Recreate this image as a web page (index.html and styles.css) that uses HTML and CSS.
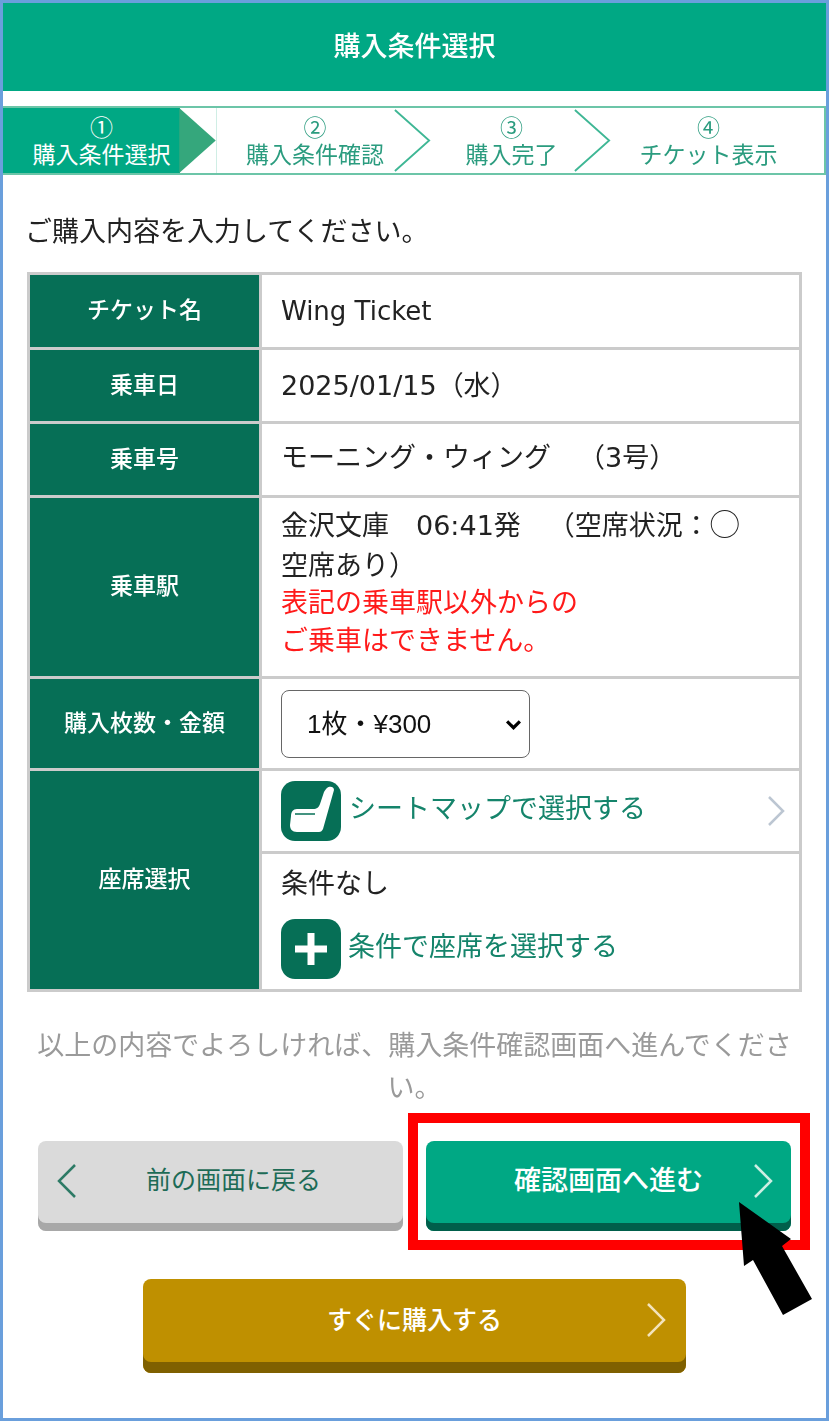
FILE: index.html
```html
<!DOCTYPE html>
<html lang="ja">
<head>
<meta charset="utf-8">
<title>購入条件選択</title>
<link rel="stylesheet" href="styles.css">
</head>
<body>
<div class="frame">
  <div class="content">
    <header class="title">購入条件選択</header>
    <nav class="steps">
      <div class="step step-active"><span>①</span><span>購入条件選択</span>
        <svg class="step-arrow" viewBox="0 0 37 66"><path d="M0 0 L37 33 L0 66 Z" fill="#35a77c"/></svg>
      </div>
      <div class="step step-2"><span>②</span><span>購入条件確認</span>
        <svg class="step-arrow" viewBox="0 0 40 66"><path d="M1 0 L38 33 L1 66" fill="none" stroke="#3fb795" stroke-width="2"/></svg>
      </div>
      <div class="step step-3"><span>③</span><span>購入完了</span>
        <svg class="step-arrow" viewBox="0 0 40 66"><path d="M1 0 L38 33 L1 66" fill="none" stroke="#3fb795" stroke-width="2"/></svg>
      </div>
      <div class="step step-4"><span>④</span><span>チケット表示</span></div>
    </nav>
    <p class="intro">ご購入内容を入力してください。</p>
    <table class="info">
      <tr class="r-name"><th>チケット名</th><td class="val val-low"><span class="ltn ltn-name">Wing Ticket</span></td></tr>
      <tr class="r-std"><th>乗車日</th><td class="val val-low"><span class="ltn">2025/01/15</span>（水）</td></tr>
      <tr class="r-std"><th>乗車号</th><td class="val">モーニング・ウィング　（<span class="ltn">3</span>号）</td></tr>
      <tr class="r-station"><th>乗車駅</th><td class="val val-high">金沢文庫　<span class="ltn">06:41</span>発　（空席状況：<span class="circle">◯</span><br>空席あり）<br><span class="warn">表記の乗車駅以外からの<br>ご乗車はできません。</span></td></tr>
      <tr class="r-qty"><th>購入枚数・金額</th><td>
        <div class="select-wrap">
          <select class="qty"><option>1枚・¥300</option></select>
          <svg class="select-arrow" viewBox="0 0 16 10"><path d="M2 2 L8 8 L14 2" fill="none" stroke="#000" stroke-width="3"/></svg>
        </div>
      </td></tr>
      <tr class="r-map"><th rowspan="2" class="th-seat">座席選択</th><td>
        <a class="link">
          <svg class="ico" viewBox="0 0 60 60"><rect width="60" height="60" rx="14" fill="#066f56"/><path d="M46 7 C48 5 53 5 53 9 L42 48 C41 50 40 51 38 51 L16 51 C11 51 9 48 9 44 L10 35 C10 31 12 28 16 28 L32 28 C36 28 38 26 39 23 L43 11 C44 9 45 8 46 7 Z" fill="#fff"/><path d="M14 33 H34" stroke="#066f56" stroke-width="1.500"/></svg>
          <span class="link-text">シートマップで選択する</span>
          <svg class="chev-link" viewBox="0 0 18 32"><path d="M2 2 L16 16 L2 30" fill="none" stroke="#bcc6d2" stroke-width="2.500"/></svg>
        </a>
      </td></tr>
      <tr class="r-cond"><td>
        <div class="cond-text">条件なし</div>
        <a class="link link-cond">
          <svg class="ico" viewBox="0 0 60 60"><rect width="60" height="60" rx="14" fill="#066f56"/><path d="M30 14 V46 M14 30 H46" stroke="#fff" stroke-width="7"/></svg>
          <span class="link-text">条件で座席を選択する</span>
        </a>
      </td></tr>
    </table>
    <p class="note">以上の内容でよろしければ、購入条件確認画面へ進んでください。</p>
    <div class="btn-row">
      <a class="btn btn-gray">
        <svg class="chev chev-left" viewBox="0 0 20 36"><path d="M18 2 L2 18 L18 34" fill="none" stroke="#2d7a65" stroke-width="2.500"/></svg>
        前の画面に戻る</a>
      <a class="btn btn-green">確認画面へ進む
        <svg class="chev chev-right" viewBox="0 0 20 36"><path d="M2 2 L18 18 L2 34" fill="none" stroke="#cdeee3" stroke-width="2.500"/></svg></a>
    </div>
    <a class="btn btn-gold">すぐに購入する
      <svg class="chev chev-right" viewBox="0 0 20 36"><path d="M2 2 L18 18 L2 34" fill="none" stroke="#f3e3bb" stroke-width="2.500"/></svg></a>
  </div>
  <div class="callout"></div>
  <svg class="pointer" viewBox="0 0 829 1422"><path d="M739 1202 L791 1239 L782 1246 L812 1299 L783 1315 L753 1260 L744 1266 Z" fill="#000"/></svg>
</div>
</body>
</html>
```
FILE: styles.css
```css
* { box-sizing: border-box; }
html, body { margin: 0; padding: 0; background: #fff; }
body { font-family: "Noto Sans CJK JP", "Noto Sans", sans-serif; color: #222; text-spacing-trim: space-all; }
.frame {
  position: relative;
  width: 829px;
  height: 1421px;
  border: 3px solid #6a9fdc;
  overflow: hidden;
}
.content { filter: blur(0.45px); }
.title {
  height: 88px;
  padding-bottom: 6px;
  background: #00a884;
  color: #fff;
  font-size: 27px;
  font-weight: 500;
  display: flex;
  align-items: center;
  justify-content: center;
}
.steps {
  margin-top: 15px;
  height: 69px;
  border: 2px solid #6cc5a8;
  border-left: 0;
  display: grid;
  grid-template-columns: 214px 214px 180px 1fr;
}
.step {
  position: relative;
  display: flex;
  flex-direction: column;
  align-items: center;
  justify-content: center;
  padding-bottom: 2px;
  color: #2b9c7f;
  font-size: 23px;
  line-height: 27px;
}
.step-2 { padding-right: 18px; }
.step-3 { padding-right: 19px; }
.step-4 { padding-right: 18px; }
.step-active {
  background: linear-gradient(to right, #00a884 177px, #fff 177px);
  border-right: 1px solid #d0eee5;
  color: #fff;
  padding-right: 16px;
}
.step-arrow {
  position: absolute;
  right: 0;
  top: 0;
  width: 37px;
  height: 100%;
}
.intro {
  margin: 35px 0 0 22px;
  font-size: 27px;
  line-height: 40px;
  color: #222;
}
.info {
  margin: 22px 0 0 24px;
  width: 775px;
  table-layout: fixed;
  border-collapse: collapse;
}
.info th, .info td { border: 3px solid #cbcbcb; }
.info th {
  width: 232px;
  background: #066f56;
  color: #fff;
  font-size: 23px;
  font-weight: 500;
  text-align: center;
  padding: 0 0 6px;
}
.info td {
  padding: 0 16px 0 19px;
  font-size: 27px;
  line-height: 37.500px;
  color: #222;
}
.info td.val { padding-bottom: 6px; }
.info td.val-low { padding-bottom: 2px; }
.info td.val-high { padding-bottom: 12px; }
.ltn { font-family: "DejaVu Sans", sans-serif; }
.ltn-name { font-size: 26px; }
.circle { font-size: 30px; line-height: 30px; }
.warn { color: #ff1a1a; }
.r-name { height: 75px; }
.r-std { height: 74px; }
.r-station { height: 181px; }
.r-qty { height: 92px; }
.r-map { height: 83px; }
.r-cond { height: 138px; }
.select-wrap { position: relative; width: 249px; height: 68px; }
.qty {
  appearance: none;
  -webkit-appearance: none;
  width: 100%;
  height: 100%;
  padding: 0 0 0 25px;
  background: #fff;
  border: 1.500px solid #666;
  border-radius: 8px;
  font-family: "Liberation Sans", "Noto Sans CJK JP", sans-serif;
  font-size: 26px;
  color: #111;
}
.select-arrow {
  position: absolute;
  right: 8px;
  top: 29px;
  width: 17px;
  height: 11px;
}
.link {
  display: flex;
  align-items: center;
  gap: 8px;
  color: #15846b;
  font-size: 27px;
}
.link-text { margin-bottom: 8px; }
.link-cond { margin-top: 20px; gap: 7px; }
.ico { width: 60px; height: 60px; flex: none; }
.chev-link { width: 18px; height: 32px; margin-left: auto; margin-right: -2px; }
.cond-text { line-height: 35px; }
.note {
  margin: 31px 0 0 24px;
  width: 775px;
  text-align: center;
  color: #9a9a9a;
  font-size: 27px;
  line-height: 42px;
}
.btn-row {
  margin: 34px 0 0 35px;
  width: 753px;
  display: flex;
  justify-content: space-between;
}
.btn {
  position: relative;
  display: flex;
  align-items: center;
  justify-content: center;
  border-radius: 8px;
  font-weight: 500;
}
.btn-gray, .btn-green { width: 365px; height: 90px; padding-bottom: 16px; }
.btn-gray {
  padding-left: 26px;
  background: #dadada;
  box-shadow: inset 0 -8px 0 #a8a8a8;
  color: #1d6b56;
  font-size: 25px;
  font-weight: 400;
}
.btn-green {
  background: #00a884;
  box-shadow: inset 0 -8px 0 #005f4b;
  color: #fff;
  font-size: 27px;
}
.btn-gold {
  margin: 48px 0 0 140px;
  width: 543px;
  height: 94px;
  padding-bottom: 16px;
  background: #bf9000;
  box-shadow: inset 0 -11px 0 #7f6000;
  color: #fff;
  font-size: 25px;
}
.chev { position: absolute; width: 20px; height: 36px; top: 22px; }
.chev-left { left: 19px; }
.chev-right { right: 18px; }
.btn-gold .chev { top: 23px; right: 20px; }
.callout {
  position: absolute;
  left: 405px;
  top: 1110px;
  width: 402px;
  height: 137px;
  border: 10px solid #f00;
}
.pointer {
  position: absolute;
  left: -3px;
  top: -3px;
  width: 829px;
  height: 1422px;
}
```
